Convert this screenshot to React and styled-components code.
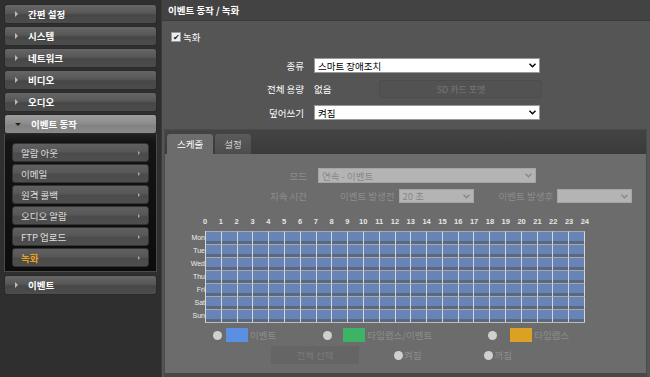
import styled, { createGlobalStyle } from "styled-components"

const Global = createGlobalStyle`
    html, body {
        margin: 0;
        padding: 0;
        background: #2f2f2f;
        font-family: "Noto Sans CJK KR", "Noto Sans", sans-serif;
        overflow: hidden;
    }
`
const Page = styled.div`
    display: flex;
    width: 650px;
    height: 377px;
`
const Sidebar = styled.div`
    width: 157px;
    padding: 4px 0 0 4px;
    box-sizing: border-box;
    margin-right: 4px;
    display: flex;
    flex-direction: column;
`
const MenuItem = styled.div`
    height: 20px;
    box-sizing: border-box;
    display: flex;
    align-items: center;
    padding-left: 10px;
    border: 1px solid #2a2a2a;
    border-radius: 3px;
    background: ${({active}) => active
        ? "linear-gradient(#9c9c9c, #8c8c8c 50%, #828282 55%, #8a8a8a)"
        : "linear-gradient(#666, #575757 45%, #474747 55%, #4c4c4c)"};
    color: #fff;
    font-size: 9.5px;
    font-weight: 700;
    margin-bottom: ${({active}) => active ? "0" : "2px"};
`
const Arrow = styled.span`
    width: 0;
    height: 0;
    margin-right: 10px;
    ${({down}) => down
        ? "border-left: 3px solid transparent; border-right: 3px solid transparent; border-top: 3px solid #222;"
        : "border-top: 3px solid transparent; border-bottom: 3px solid transparent; border-left: 3px solid #bbb;"}
`
const SubMenu = styled.div`
    background: linear-gradient(#222 0, #141414 8px, #0c0c0c);
    border: 1px solid #4a4a4a;
    border-top: none;
    padding: 9px 7px 4px 7px;
    margin-bottom: 3px;
    display: flex;
    flex-direction: column;
    gap: 2px;
`
const SubItem = styled.div`
    height: 19px;
    box-sizing: border-box;
    display: flex;
    align-items: center;
    justify-content: space-between;
    padding: 0 8px 0 8px;
    border-radius: 3px;
    border: 1px solid #333;
    background: linear-gradient(#606060, #575757 45%, #4b4b4b 55%, #4e4e4e);
    color: ${({current}) => current ? "#e8a21a" : "#dcdcdc"};
    font-size: 9.5px;
    font-weight: ${({current}) => current ? 700 : 400};
`
const SmallArrow = styled.span`
    border-top: 2.5px solid transparent;
    border-bottom: 2.5px solid transparent;
    border-left: 2.5px solid #aaa;
`
const Main = styled.div`
    flex: 1;
    background: #555;
    display: flex;
    flex-direction: column;
    border-left: 1px solid #3a3a3a;
`
const Header = styled.div`
    height: 20px;
    background: #434343;
    border-bottom: 1px solid #3b3b3b;
    display: flex;
    align-items: center;
    padding-left: 6px;
    color: #fff;
    font-size: 9.5px;
    font-weight: 700;
`
const CheckRow = styled.label`
    display: flex;
    align-items: center;
    gap: 2px;
    margin: 9px 0 0 9px;
    color: #fff;
    font-size: 9.5px;
`
const CheckBox = styled.span`
    width: 8px;
    height: 8px;
    background: #eee;
    border: 1px solid #999;
    display: flex;
    align-items: center;
    justify-content: center;
    color: #222;
    font-size: 8px;
    line-height: 1;
`
const Form = styled.div`
    display: grid;
    grid-template-columns: 142px 1fr;
    column-gap: 10px;
    row-gap: 7px;
    margin-top: 14px;
    align-items: center;
    font-size: 9.5px;
`
const Label = styled.div`
    text-align: right;
    color: ${({dim}) => dim ? "#8d8d8d" : "#fff"};
`
const Select = styled.div`
    width: ${({w}) => w}px;
    height: ${({h}) => h || 15}px;
    box-sizing: border-box;
    background: ${({dim}) => dim ? "#b4b4b4" : "#fff"};
    border: 1px solid ${({dim}) => dim ? "#a5a5a5" : "#999"};
    color: ${({dim}) => dim ? "#888" : "#000"};
    display: flex;
    align-items: center;
    justify-content: space-between;
    padding: 0 3px 0 3px;
    font-size: 9.5px;
`
const Chevron = () => (
    <svg width="7" height="5" viewBox="0 0 7 5">
        <path d="M0.5 0.8 L3.5 3.8 L6.5 0.8" fill="none" stroke="currentColor" strokeWidth="1.4" />
    </svg>
)
const Capacity = styled.div`
    display: flex;
    align-items: center;
    color: #fff;
    gap: 48px;
`
const FormatButton = styled.div`
    width: 163px;
    height: 18px;
    box-sizing: border-box;
    border: 1px solid #4c4c4c;
    border-radius: 3px;
    background: #525252;
    color: #777;
    display: flex;
    align-items: center;
    justify-content: center;
    font-size: 9px;
`
const Tabs = styled.div`
    margin: 9px 3px 0 2px;
    flex: 1;
    background: #3d3d3d;
    border: 1px solid #4a4a4a;
    border-bottom: 4px solid #484848;
    display: flex;
    flex-direction: column;
`
const TabBar = styled.div`
    display: flex;
    gap: 2px;
    padding: 4px 0 0 2px;
    background: linear-gradient(#444, #3a3a3a);
`
const Tab = styled.div`
    height: 20px;
    padding: 0 ${({active}) => active ? "10px" : "9px"};
    box-sizing: border-box;
    display: flex;
    align-items: center;
    border-radius: 3px 3px 0 0;
    background: ${({active}) => active ? "#6c6c6c" : "linear-gradient(#5a5a5a, #4d4d4d)"};
    color: ${({active}) => active ? "#fff" : "#d0d0d0"};
    font-size: 9.5px;
`
const TabBody = styled.div`
    flex: 1;
    background: #6c6c6c;
    display: flex;
    flex-direction: column;
    font-size: 9.5px;
    color: #8d8d8d;
`
const ModeGrid = styled.div`
    display: grid;
    grid-template-columns: 142px auto;
    column-gap: 11px;
    row-gap: 6px;
    margin-top: 14px;
    align-items: center;
`
const DurationRow = styled.div`
    display: flex;
    align-items: center;
    gap: 4px;
    margin-left: 22px;
`
const Spacer = styled.span`
    width: ${({w}) => w}px;
    flex-shrink: 0;
`
const Schedule = styled.div`
    margin: 14px 0 0 21px;
    display: grid;
    grid-template-columns: 19px 380px;
`
const Hours = styled.div`
    grid-column: 2;
    display: flex;
    justify-content: space-between;
    margin: 0 -5px 4px -5px;
    height: 10px;
`
const Hour = styled.span`
    width: 10px;
    text-align: center;
    color: #e6e6e6;
    font-family: "Liberation Sans", Arial, sans-serif;
    font-size: 7.5px;
    font-weight: 700;
`
const Days = styled.div`
    display: flex;
    flex-direction: column;
`
const Day = styled.div`
    height: 13px;
    display: flex;
    align-items: center;
    justify-content: flex-end;
    white-space: nowrap;
    color: #ececec;
    font-family: "Liberation Sans", Arial, sans-serif;
    font-size: 7px;
`
const Cells = styled.div`
    display: grid;
    grid-template-columns: repeat(24, 1fr);
    grid-auto-rows: 13px;
    border-left: 1px solid #d6d6d6;
    border-bottom: 1px solid #bdbdbd;
`
const Cell = styled.div`
    border-right: 1px solid #d6d6d6;
    border-top: 1px solid #a9a9a9;
    background: #6883b6;
    box-shadow: inset 0 -3px 0 #5a6880;
`
const Legend = styled.div`
    display: flex;
    align-items: center;
    margin: 5px 0 0 48px;
`
const Radio = styled.span`
    width: 9px;
    height: 9px;
    border-radius: 50%;
    background: #d0d0d0;
    flex-shrink: 0;
`
const Swatch = styled.span`
    width: 22px;
    height: 14px;
    margin: 0 2px 0 ${({gap}) => gap}px;
    background: ${({color}) => color};
`
const Bottom = styled.div`
    display: flex;
    align-items: center;
    margin: 4px 0 0 106px;
`
const SelectAll = styled.div`
    width: 88px;
    height: 18px;
    display: flex;
    align-items: center;
    justify-content: center;
    background: #656565;
    color: #7a7a7a;
`
const RadioLabel = styled.span`
    display: flex;
    align-items: center;
    gap: 1px;
`

const menus = ["간편 설정", "시스템", "네트워크", "비디오", "오디오"]
const subs = ["알람 아웃", "이메일", "원격 콜백", "오디오 알람", "FTP 업로드", "녹화"]
const days = ["Mon", "Tue", "Wed", "Thu", "Fri", "Sat", "Sun"]

const App = () => {
    return(
        <Page>
            <Global />
            <Sidebar>
                {menus.map(m => (
                    <MenuItem key={m}><Arrow />{m}</MenuItem>
                ))}
                <MenuItem active><Arrow down />이벤트 동작</MenuItem>
                <SubMenu>
                    {subs.map(s => (
                        <SubItem key={s} current={s === "녹화"}>{s}<SmallArrow /></SubItem>
                    ))}
                </SubMenu>
                <MenuItem><Arrow />이벤트</MenuItem>
            </Sidebar>
            <Main>
                <Header>이벤트 동작 / 녹화</Header>
                <CheckRow><CheckBox>✔</CheckBox>녹화</CheckRow>
                <Form>
                    <Label>종류</Label>
                    <Select w={226}>스마트 장애조치<Chevron /></Select>
                    <Label>전체 용량</Label>
                    <Capacity>없음<FormatButton>SD 카드 포맷</FormatButton></Capacity>
                    <Label>덮어쓰기</Label>
                    <Select w={226}>켜짐<Chevron /></Select>
                </Form>
                <Tabs>
                    <TabBar>
                        <Tab active>스케줄</Tab>
                        <Tab>설정</Tab>
                    </TabBar>
                    <TabBody>
                        <ModeGrid>
                            <Label dim>모드</Label>
                            <Select dim w={218}>연속 - 이벤트<Chevron /></Select>
                            <Label dim>지속 시간</Label>
                            <DurationRow>
                                <span>이벤트 발생전</span>
                                <Select dim w={75} h={14}>20 초<Chevron /></Select>
                                <Spacer w={17} />
                                <span>이벤트 발생후</span>
                                <Select dim w={75} h={14}><span /><Chevron /></Select>
                            </DurationRow>
                        </ModeGrid>
                        <Schedule>
                            <Hours>
                                {Array.from({length: 25}, (_, i) => <Hour key={i}>{i}</Hour>)}
                            </Hours>
                            <Days>
                                {days.map(d => <Day key={d}>{d}</Day>)}
                            </Days>
                            <Cells>
                                {Array.from({length: 24 * 7}, (_, i) => <Cell key={i} />)}
                            </Cells>
                        </Schedule>
                        <Legend>
                            <Radio />
                            <Swatch gap={4} color="#5b8fe2" />
                            <span>이벤트</span>
                            <Spacer w={47} />
                            <Radio />
                            <Swatch gap={11} color="#3db465" />
                            <span>타임랩스/이벤트</span>
                            <Spacer w={56} />
                            <Radio />
                            <Swatch gap={13} color="#dba122" />
                            <span>타임랩스</span>
                        </Legend>
                        <Bottom>
                            <SelectAll>전체 선택</SelectAll>
                            <Spacer w={35} />
                            <RadioLabel><Radio />켜짐</RadioLabel>
                            <Spacer w={63} />
                            <RadioLabel><Radio />꺼짐</RadioLabel>
                        </Bottom>
                    </TabBody>
                </Tabs>
            </Main>
        </Page>
    )
}

export default App
